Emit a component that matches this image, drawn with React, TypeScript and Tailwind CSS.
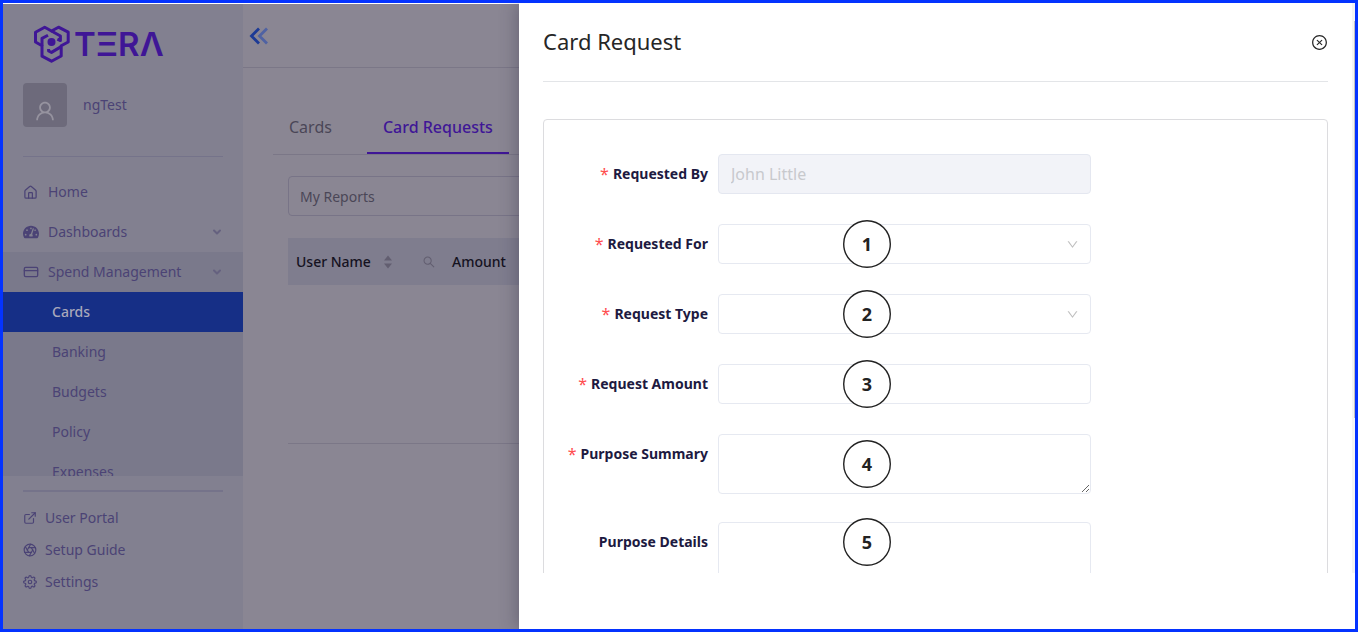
import React from 'react';
import { FaTachometerAlt } from 'react-icons/fa';
import { LuAperture, LuChevronDown, LuCreditCard, LuHouse } from 'react-icons/lu';
import { AiOutlineCloseCircle, AiOutlineUser, AiOutlineDown, AiOutlineSearch } from 'react-icons/ai';
import { FiExternalLink, FiSettings } from 'react-icons/fi';

interface Field {
  id: string;
  label: string;
  kind: 'readonly' | 'select' | 'input' | 'textarea';
  required?: boolean;
  step?: number;
}

const FIELDS: Field[] = [
  { id: 'requested-by', label: 'Requested By', kind: 'readonly', required: true },
  { id: 'requested-for', label: 'Requested For', kind: 'select', required: true, step: 1 },
  { id: 'request-type', label: 'Request Type', kind: 'select', required: true, step: 2 },
  { id: 'request-amount', label: 'Request Amount', kind: 'input', required: true, step: 3 },
  { id: 'purpose-summary', label: 'Purpose Summary', kind: 'textarea', required: true, step: 4 },
  { id: 'purpose-details', label: 'Purpose Details', kind: 'textarea', step: 5 },
];

const SUB_ITEMS = ['Banking', 'Budgets', 'Policy', 'Expenses'];

const Logo: React.FC = () => (
  <a href="#" aria-label="TERA" className="flex items-center gap-1 pl-[31px] text-[#3f1696]">
    <svg className="h-[38px] w-9" viewBox="0 0 36 38" fill="none" stroke="currentColor" strokeWidth="3" strokeLinejoin="round">
      <path d="M10.7 2.2 L1.5 7.2 V17 L8 20.8 V31.2 L17.5 36.2 L27.2 31 V20.8 L34.2 17 V7.2 L24.5 2.2 L17.5 6 Z" />
      <path d="M17.5 6 L26.4 11 V15.6 L23.4 14.2" />
      <path d="M14 10.2 L8 13.4 V20.8" />
      <path d="M14.6 24 V26 L17.5 27.4 L27.2 21.6" />
      <circle cx="17.5" cy="17" r="4" fill="currentColor" stroke="none" />
    </svg>
    <span className="font-[Inter] text-[33px] leading-[38px] font-semibold">TΞRΛ</span>
  </a>
);

const Sidebar: React.FC = () => (
  <aside className="flex w-60 shrink-0 flex-col bg-[#828090] text-[#4b4375]">
    <div className="pt-[21px]"><Logo /></div>
    <div className="mx-5 mt-5 flex items-center gap-4 border-b border-[#75738a] pb-[29px]">
      <div className="flex h-11 w-11 items-end justify-center rounded bg-[#6d6a7b] pb-1 text-[#96939f]">
        <AiOutlineUser size={24} />
      </div>
      <span>ngTest</span>
    </div>
    <nav className="mt-[15px] h-[304px] overflow-hidden">
      <a href="#" className="flex h-10 items-center gap-2.5 px-5"><LuHouse size={15} />Home</a>
      <a href="#" className="flex h-10 items-center gap-[9px] px-5">
        <FaTachometerAlt size={16} />Dashboards<LuChevronDown size={12} strokeWidth={4} className="ml-auto text-[#65617f]" />
      </a>
      <div className="bg-[#7a798b]">
        <a href="#" className="flex h-10 items-center gap-[9px] px-5">
          <LuCreditCard size={16} />Spend Management<LuChevronDown size={12} strokeWidth={4} className="ml-auto text-[#65617f]" />
        </a>
        <a href="#" className="flex h-10 items-center bg-[#162f86] pl-[49px] font-medium text-[#a9a8bb]">Cards</a>
        {SUB_ITEMS.map((item) => (
          <a key={item} href="#" className="flex h-10 items-center pl-[49px]">{item}</a>
        ))}
      </div>
    </nav>
    <div className="mx-5 mt-3.5 flex flex-col border-t-2 border-[#75738a] pt-2.5">
      <a href="#" className="flex h-8 items-center gap-2"><FiExternalLink size={14} />User Portal</a>
      <a href="#" className="flex h-8 items-center gap-2"><LuAperture size={14} />Setup Guide</a>
      <a href="#" className="flex h-8 items-center gap-2"><FiSettings size={14} />Settings</a>
    </div>
  </aside>
);

const CardRequests: React.FC = () => (
  <main className="min-w-0 flex-1 bg-[#8a8693] text-[#4a4657]">
    <header className="flex h-16 items-center border-b border-[#7b7787] px-1.5">
      <button aria-label="Collapse menu">
        <svg className="h-[18px] w-5" viewBox="0 0 20 18" fill="none" strokeWidth="2.8">
          <path d="M10 1.5 L2.5 9 L10 16.5" stroke="#1c3a96" />
          <path d="M18 1.5 L10.5 9 L18 16.5" stroke="#4f62a3" />
        </svg>
      </button>
    </header>
    <div className="mt-9 ml-[30px] flex border-b border-[#7b7787]">
      <button className="border-b-2 border-transparent px-4 pt-[11px] pb-[13px] text-base">Cards</button>
      <button className="ml-[19px] border-b-2 border-[#3f1696] px-4 pt-[11px] pb-[13px] text-base font-medium text-[#3f1696]">Card Requests</button>
    </div>
    <div className="mt-[21px] ml-[45px]">
      <input aria-label="Report" defaultValue="My Reports" className="block h-10 w-full rounded border border-[#787487] px-[11px]" />
      <table className="mt-[22px] w-full border-b border-[#7b7787] text-left">
        <thead className="h-[47px] bg-[#7f7d8e] text-[#15121f]">
          <tr>
            <th className="w-[156px] px-2 font-medium">
              <div className="flex items-center">
                User Name
                <svg className="ml-3 h-3.5 w-2.5 text-[#625e70]" viewBox="0 0 10 14" fill="currentColor">
                  <path d="M5 0.5 L9 5.5 H1 Z M5 13.5 L1 8.5 H9 Z" />
                </svg>
                <AiOutlineSearch size={14} className="ml-auto text-[#625e70]" />
              </div>
            </th>
            <th className="px-2 font-medium">Amount</th>
          </tr>
        </thead>
        <tbody><tr><td colSpan={2} className="h-[158px]" /></tr></tbody>
      </table>
    </div>
  </main>
);

const Control: React.FC<{ field: Field }> = ({ field }) => {
  switch (field.kind) {
    case 'readonly':
      return <input id={field.id} disabled placeholder="John Little" className="block h-10 w-full rounded border border-[#e4e7f0] bg-[#f2f3f8] px-3 text-base placeholder:text-[#c8c9cd]" />;
    case 'select':
      return (
        <>
          <select id={field.id} className="block h-10 w-full appearance-none rounded border border-[#e6e9f1] bg-white px-3">
            <option value="" />
          </select>
          <AiOutlineDown size={13} className="pointer-events-none absolute top-3.5 right-3 text-[#bfbfbf]" />
        </>
      );
    case 'input':
      return <input id={field.id} className="block h-10 w-full rounded border border-[#e6e9f1] px-3" />;
    default:
      return <textarea id={field.id} className="block h-[60px] w-full rounded border border-[#e6e9f1] px-3" />;
  }
};

// Numbered callout that floats over a control
const StepMarker: React.FC<{ step: number; centered: boolean }> = ({ step, centered }) => (
  <span className={`absolute left-[149px] flex h-12 w-12 -translate-1/2 items-center justify-center text-lg font-bold text-[#222] ${centered ? 'top-1/2' : 'top-5'}`}>
    <svg className="absolute inset-0" viewBox="0 0 48 48" fill="#fff" stroke="#222" strokeWidth="1.4">
      <circle cx="24" cy="24" r="23.3" />
    </svg>
    <span className="relative">{step}</span>
  </span>
);

const Drawer: React.FC = () => (
  <section role="dialog" aria-label="Card Request" className="absolute inset-y-0 right-0 flex w-[calc(100%-516px)] bg-white pb-14 shadow-[-2px_0_16px_rgba(40,36,60,0.35)]">
    <div className="flex min-w-0 flex-1 flex-col overflow-hidden px-6">
      <div className="flex h-[79px] shrink-0 items-center justify-between border-b border-[#e3e5e8]">
        <h1 className="text-[22px] text-[#262626]">Card Request</h1>
        <button aria-label="Close" className="text-[#262626]"><AiOutlineCloseCircle size={17} /></button>
      </div>
      <form className="mt-[37px] shrink-0 rounded border border-[#dcdcdf] pt-[34px] pb-8">
        {FIELDS.map((field) => (
          <div key={field.id} className={field.kind === 'textarea' ? 'mb-7 flex' : 'mb-[30px] flex'}>
            <label htmlFor={field.id} className="mr-2.5 flex w-[164px] shrink-0 justify-end gap-1 leading-10 font-bold text-[#1d1a41]">
              {field.required && <span className="text-base leading-10 font-normal text-[#ff4d4f]">*</span>}
              {field.label}
            </label>
            <div className="relative w-[373px]">
              <Control field={field} />
              {field.step && <StepMarker step={field.step} centered={field.id === 'purpose-summary'} />}
            </div>
          </div>
        ))}
      </form>
    </div>
    <div className="w-[3px] bg-[#f5f5f5] pt-[18px]">
      <div className="ml-0.5 h-[72%] bg-[#c1c1c1]" />
    </div>
  </section>
);

const App: React.FC = () => (
  <div className="relative flex h-screen overflow-hidden border-[3px] border-[#0433ff] bg-white pt-px font-['Noto_Sans',sans-serif] text-sm">
    <Sidebar />
    <CardRequests />
    <Drawer />
  </div>
);

export default App;
